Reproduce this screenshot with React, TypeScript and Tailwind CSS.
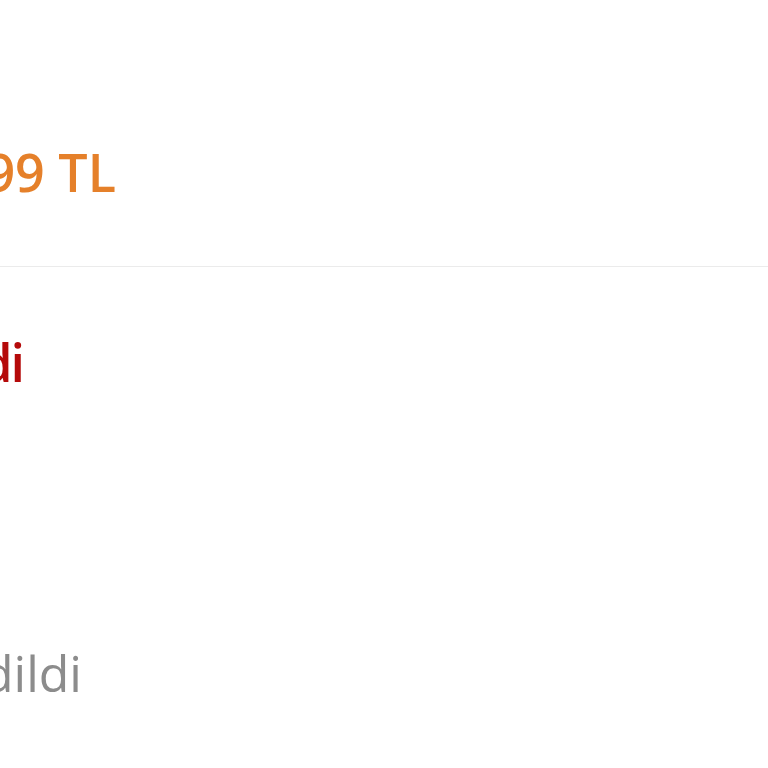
const App = () => {
  return (
    <div className="flex flex-col w-[768px] h-[768px] overflow-hidden bg-white font-['Open_Sans',sans-serif]">
      <section className="flex flex-col h-[267px] pt-[146px] border-b border-[#ebebeb]">
        <p className="w-[116px] flex justify-end whitespace-nowrap text-[52px] leading-[52px] font-semibold text-[#e5802a]">
          1.299,99 TL
        </p>
      </section>
      <section className="flex flex-col gap-[259px] pt-[69px]">
        <p className="w-[23px] flex justify-end whitespace-nowrap text-[52px] leading-[52px] font-semibold tracking-[-2px] text-[#b50a0a]">
          Tükendi
        </p>
        <p className="w-[82px] flex justify-end whitespace-nowrap text-[50px] leading-[52px] text-[#8c8c8c]">
          Teslim edildi
        </p>
      </section>
    </div>
  );
};

export default App;
